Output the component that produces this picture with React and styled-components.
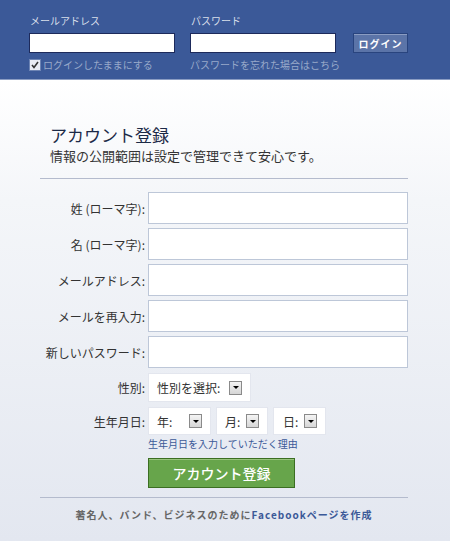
import React from 'react'
import styled, { createGlobalStyle } from 'styled-components'

const font = `"Noto Sans CJK JP", "Liberation Sans", sans-serif`

const GlobalStyle = createGlobalStyle`
  html, body {
    margin: 0;
    padding: 0;
  }
  body {
    font-family: ${font};
    background: #e6e9f1;
  }
`

const Page = styled.div`
  width: 450px;
  height: 541px;
  overflow: hidden;
  background: linear-gradient(#ffffff 0px, #ffffff 81px, #f4f6f9 200px, #e3e7f0 541px);
`

const Header = styled.header`
  height: 80px;
  box-sizing: border-box;
  background: #3b5998;
  border-bottom: 1px solid #8b9dc3;
  padding: 13px 0 0 29px;
  display: flex;
  align-items: flex-start;
`

const LoginField = styled.div`
  display: flex;
  flex-direction: column;
  width: 146px;
  margin-right: ${p => p.gap || 0}px;
`

const HeaderLabel = styled.label`
  font-size: 10px;
  line-height: 16px;
  color: #d8dfea;
  padding-left: 1px;
`

const HeaderInput = styled.input`
  margin: 4px 0 0;
  width: 146px;
  height: 20px;
  box-sizing: border-box;
  border: 1px solid #1d2a5b;
  background: #fff;
  padding: 0 3px;
`

const HeaderNote = styled.div`
  margin-top: 5px;
  display: flex;
  align-items: center;
  gap: 2px;
  font-size: 10px;
  line-height: 14px;
  color: #98a9ca;
  white-space: nowrap;
`

const CheckBox = styled.span`
  width: 10px;
  height: 10px;
  border: 1px solid #6d84b4;
  background: #e9ecf3;
  display: flex;
  align-items: center;
  justify-content: center;
`

const LoginButton = styled.button`
  margin-top: 20px;
  width: 55px;
  height: 20px;
  border: 1px solid #29447e;
  background: #5b74a8;
  color: #fff;
  font-family: ${font};
  font-weight: bold;
  font-size: 10px;
  letter-spacing: 1px;
  padding: 0;
  box-shadow: inset 0 1px 0 #8a9cc2;
`

const Main = styled.main`
  padding: 0 42px 0 40px;
`

const Intro = styled.div`
  padding: 42px 0 13px 10px;
  border-bottom: 1px solid #b4bbcd;
`

const Title = styled.h1`
  margin: 0;
  font-size: 17px;
  line-height: 25px;
  font-weight: normal;
  color: #1c2a47;
`

const Subtitle = styled.p`
  margin: 0;
  font-size: 13px;
  line-height: 18px;
  color: #333;
`

const Form = styled.div`
  margin-top: 13px;
  display: flex;
  flex-direction: column;
`

const Row = styled.div`
  display: flex;
  align-items: center;
  margin-top: ${p => p.top || 0}px;
`

const Label = styled.label`
  width: 105px;
  margin-right: 3px;
  text-align: right;
  font-size: 12px;
  color: #333;
  white-space: nowrap;
`

const TextInput = styled.input`
  width: 260px;
  height: 32px;
  box-sizing: border-box;
  border: 1px solid #bdc7d8;
  background: #fff;
  margin: 0;
`

const Selects = styled.div`
  display: flex;
  gap: ${p => p.gap || 5}px;
`

const SelectBox = styled.div`
  width: ${p => p.w}px;
  height: ${p => p.h || 29}px;
  box-sizing: border-box;
  background: #fff;
  border: 1px solid #e3e6ee;
  display: flex;
  align-items: center;
  justify-content: space-between;
  padding: 0 ${p => p.pr || 8}px 0 ${p => p.pl || 8}px;
  font-size: 12px;
  color: #333;
`

const Arrow = styled.span`
  width: 13px;
  height: 14px;
  box-sizing: border-box;
  border: 1px solid #8a8a8a;
  background: linear-gradient(#f4f4f4, #d6d6d6);
  display: flex;
  align-items: center;
  justify-content: center;
  &::after {
    content: '';
    border-left: 3px solid transparent;
    border-right: 3px solid transparent;
    border-top: 3px solid #000;
  }
`

const HelpLink = styled.a`
  display: block;
  margin: 2px 0 0 108px;
  font-size: 10px;
  line-height: 14px;
  color: #3b5998;
  text-decoration: none;
`

const SignupButton = styled.button`
  margin: 7px 0 0 108px;
  width: 147px;
  height: 30px;
  border: 1px solid #3b6e22;
  background: #67a54b;
  box-shadow: inset 0 1px 0 #98c37d;
  color: #fff;
  font-family: ${font};
  font-size: 14px;
  font-weight: 500;
  padding: 0;
`

const Footer = styled.div`
  margin-top: 9px;
  border-top: 1px solid #b4bbcd;
  padding-top: 9px;
  text-align: center;
  font-size: 10px;
  font-weight: bold;
  color: #666;
  letter-spacing: 1px;
`

const FooterLink = styled.a`
  color: #3b5998;
  text-decoration: none;
`

const fields = ['姓 (ローマ字):', '名 (ローマ字):', 'メールアドレス:', 'メールを再入力:', '新しいパスワード:']

export default function App() {
  return (
    <Page>
      <GlobalStyle />
      <Header>
        <LoginField gap={15}>
          <HeaderLabel>メールアドレス</HeaderLabel>
          <HeaderInput type="text" />
          <HeaderNote>
            <CheckBox>
              <svg width="8" height="8" viewBox="0 0 8 8">
                <path d="M1 4 L3 6.5 L7 1" fill="none" stroke="#333" strokeWidth="1.6" />
              </svg>
            </CheckBox>
            ログインしたままにする
          </HeaderNote>
        </LoginField>
        <LoginField gap={17}>
          <HeaderLabel>パスワード</HeaderLabel>
          <HeaderInput type="password" />
          <HeaderNote>パスワードを忘れた場合はこちら</HeaderNote>
        </LoginField>
        <LoginButton>ログイン</LoginButton>
      </Header>
      <Main>
        <Intro>
          <Title>アカウント登録</Title>
          <Subtitle>情報の公開範囲は設定で管理できて安心です。</Subtitle>
        </Intro>
        <Form>
          {fields.map((f, i) => (
            <Row key={f} top={i ? 4 : 0}>
              <Label>{f}</Label>
              <TextInput type="text" />
            </Row>
          ))}
          <Row top={5}>
            <Label>性別:</Label>
            <SelectBox w={103}>
              性別を選択:
              <Arrow />
            </SelectBox>
          </Row>
          <Row top={5}>
            <Label>生年月日:</Label>
            <Selects>
              <SelectBox w={63} h={28}>
                年:
                <Arrow />
              </SelectBox>
              <SelectBox w={52} h={28}>
                月:
                <Arrow />
              </SelectBox>
              <SelectBox w={53} h={28} pl={9}>
                日:
                <Arrow />
              </SelectBox>
            </Selects>
          </Row>
          <HelpLink>生年月日を入力していただく理由</HelpLink>
          <SignupButton>アカウント登録</SignupButton>
        </Form>
        <Footer>
          著名人、バンド、ビジネスのために<FooterLink>Facebookページを作成</FooterLink>
        </Footer>
      </Main>
    </Page>
  )
}
